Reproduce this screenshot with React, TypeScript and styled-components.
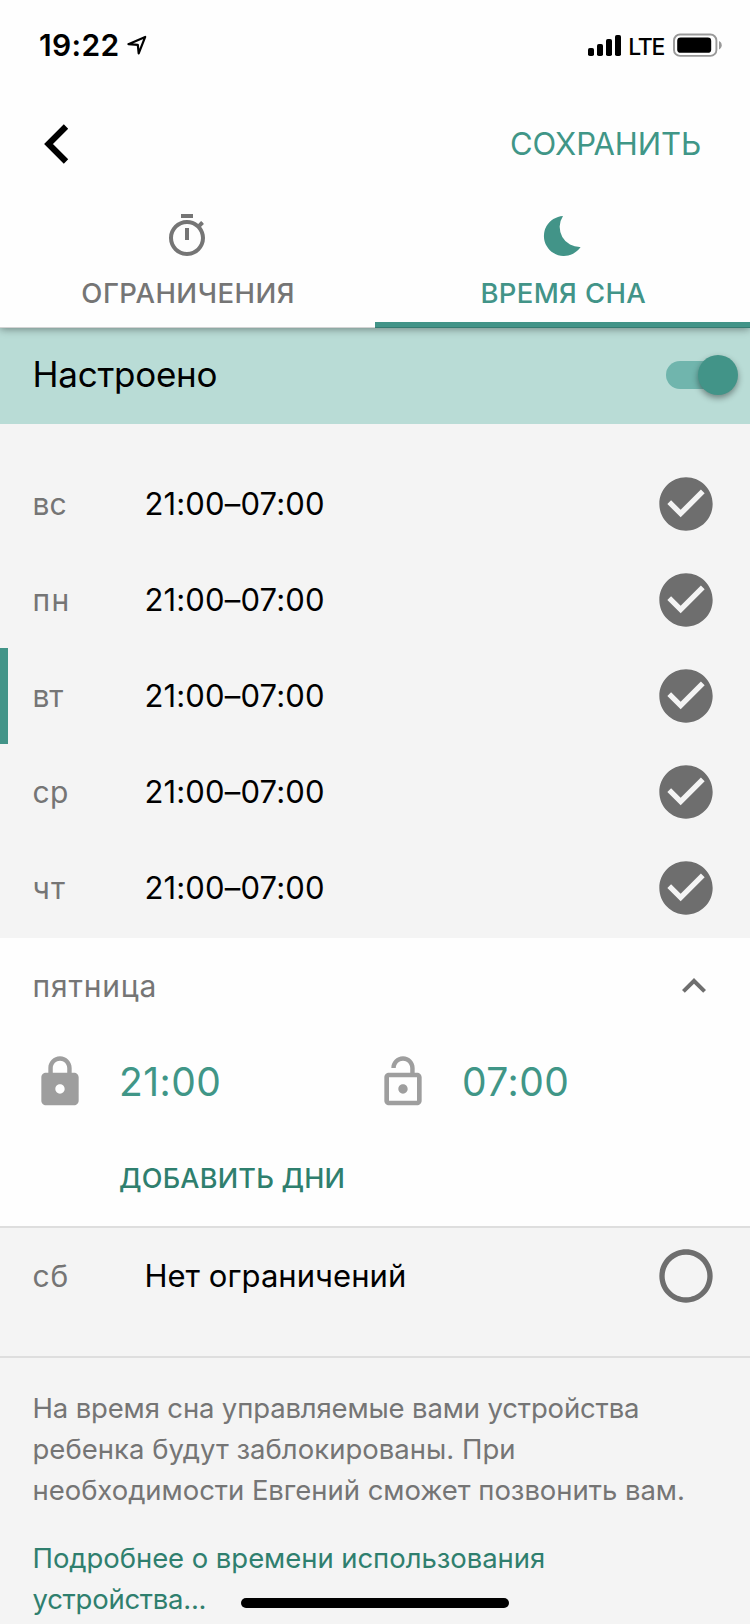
import React from "react";
import styled, { createGlobalStyle } from "styled-components";

const color = {
  accent: "#429488",
  accentText: "#409687",
  link: "#2f7f6e",
  grey: "#757575",
  icon: "#6e6e6e",
  lock: "#9e9e9e",
  page: "#f4f4f4",
  line: "#dedede",
};

const GlobalStyle = createGlobalStyle`
  * { box-sizing: border-box; }
  body {
    margin: 0;
    background: ${color.page};
    font-family: Inter, "Liberation Sans", sans-serif;
    color: #000;
  }
  svg { display: block; flex: none; }
`;

const Screen = styled.div`
  position: relative;
  width: 750px;
  height: 1624px;
  overflow: hidden;
  background: ${color.page};
  white-space: nowrap;
`;

const Header = styled.header`
  position: relative;
  z-index: 1;
  height: 328px;
  background: #fefefe;
  box-shadow: 0 1px 8px rgba(0, 0, 0, 0.42);
  &::after {
    content: "";
    position: absolute;
    left: 0;
    right: 0;
    bottom: 0;
    height: 1px;
    background: rgba(0, 0, 0, 0.17);
  }
`;

const StatusBar = styled.div`
  display: flex;
  align-items: center;
  height: 90px;
  padding: 0 28px 0 39px;
`;

const Clock = styled.div`
  font-size: 30px;
  font-weight: 600;
  line-height: 36px;
  letter-spacing: 0.34px;
  margin-right: 6px;
`;

const StatusRight = styled.div`
  display: flex;
  align-items: center;
  margin-left: auto;
`;

const Network = styled.span`
  font-size: 23px;
  font-weight: 500;
  line-height: 28px;
  letter-spacing: -1.3px;
  margin: 3px 9px 0 7px;
`;

const NavBar = styled.nav`
  display: flex;
  align-items: center;
  justify-content: space-between;
  height: 108px;
  padding: 0 49px 0 32px;
`;

const PlainButton = styled.button`
  border: 0;
  padding: 0;
  background: none;
  font: inherit;
  color: inherit;
`;

const SaveButton = styled(PlainButton)`
  font-size: 31px;
  line-height: 40px;
  letter-spacing: -0.1px;
  color: ${color.accentText};
`;

const Tabs = styled.div`
  display: grid;
  grid-template-columns: 1fr 1fr;
  height: 130px;
`;

const Tab = styled(PlainButton)<{ $active?: boolean; $spacing: number }>`
  display: flex;
  flex-direction: column;
  align-items: center;
  padding-top: 14px;
  gap: 16px;
  border-bottom: 6px solid ${(p) => (p.$active ? color.accent : "transparent")};
  color: ${(p) => (p.$active ? color.accent : color.grey)};
  font-size: 27.5px;
  font-weight: 450;
  line-height: 34px;
  letter-spacing: ${(p) => p.$spacing}px;

  svg {
    margin-right: 1px;
  }
`;

const TabLabel = styled.span`
  padding-left: 1.5px;
`;

const ToggleRow = styled.div`
  display: flex;
  align-items: center;
  justify-content: space-between;
  height: 96px;
  padding: 0 12px 2px 32px;
  background: #b9dcd6;
`;

const ToggleLabel = styled.span`
  padding: 0 0 2px 0.5px;
  font-size: 35px;
  line-height: 44px;
  letter-spacing: -0.25px;
`;

const Switch = styled.div`
  display: flex;
  align-items: center;
  justify-content: flex-end;
  width: 72px;
  height: 28px;
  border-radius: 14px;
  background: linear-gradient(to right, #70b5ad 54px, transparent 54px);
`;

const Knob = styled.span`
  width: 40px;
  height: 40px;
  border-radius: 50%;
  background: ${color.accent};
  box-shadow: 0 3px 6px rgba(0, 0, 0, 0.4);
`;

const DayList = styled.div`
  padding: 32px 0 2px;
`;

const DayRow = styled.div<{ $today?: boolean }>`
  display: flex;
  align-items: center;
  height: 96px;
  padding: 0 32px 0 24px;
  border-left: 8px solid ${(p) => (p.$today ? color.accent : "transparent")};
`;

const DayName = styled.span<{ $spacing?: number }>`
  width: 112px;
  padding-left: 0.6px;
  font-size: 30px;
  line-height: 40px;
  letter-spacing: ${(p) => p.$spacing ?? 0}px;
  color: ${color.grey};
`;

const DayValue = styled.span<{ $spacing?: number }>`
  flex: 1;
  padding-left: 0.4px;
  font-size: 31px;
  line-height: 40px;
  letter-spacing: ${(p) => p.$spacing ?? 0.17}px;
`;

const Card = styled.section`
  height: 290px;
  background: #fefefe;
  border-bottom: 2px solid ${color.line};
`;

const CardRow = styled.div`
  display: flex;
  align-items: center;
  height: 96px;
  padding: 0 32px;
`;

const CardHeader = styled(CardRow)`
  justify-content: space-between;
`;

const TimeSlot = styled.div`
  display: flex;
  align-items: center;
  gap: 31px;
  width: 343px;
  font-size: 39px;
  line-height: 48px;
  letter-spacing: 0.45px;
  color: ${color.accentText};
`;

const AddDays = styled(PlainButton)`
  margin-left: 87px;
  padding-top: 2px;
  font-size: 27px;
  font-weight: 550;
  line-height: 34px;
  letter-spacing: 0.22px;
  color: ${color.link};
`;

const LastDay = styled.div`
  height: 130px;
  border-bottom: 2px solid ${color.line};
`;

const Notes = styled.div`
  display: flex;
  flex-direction: column;
  gap: 27px;
  padding: 30px 32px 0 32.5px;
  font-size: 27.5px;
  line-height: 41px;
`;

const Note = styled.div`
  color: ${color.grey};
`;

const NoteLink = styled(Note)`
  color: ${color.link};
`;

const TextLine = styled.div<{ $spacing: number }>`
  letter-spacing: ${(p) => p.$spacing}px;
`;

const HomeIndicator = styled.div`
  position: absolute;
  left: 241px;
  bottom: 16px;
  width: 268px;
  height: 10px;
  border-radius: 5px;
  background: #000;
`;

const MaterialIcon = ({ size, fill = "currentColor", d }: { size: number; fill?: string; d: string }) => (
  <svg width={size} height={size} viewBox="0 0 24 24" fill={fill}>
    <path d={d} />
  </svg>
);

const icons = {
  timer:
    "M15 1H9v2h6V1zm-4 13h2V8h-2v6zm8.03-6.61l1.42-1.42c-.43-.51-.9-.99-1.41-1.41l-1.42 1.42C16.07 4.74 14.12 4 12 4c-4.97 0-9 4.03-9 9s4.02 9 9 9 9-4.03 9-9c0-2.12-.74-4.07-1.97-5.61zM12 20c-3.87 0-7-3.13-7-7s3.13-7 7-7 7 3.13 7 7-3.13 7-7 7z",
  moon: "M12.5 2A10 10 0 1 0 21.3 17.5A10 10 0 0 1 12.5 2z",
  checked:
    "M12 2C6.48 2 2 6.48 2 12s4.48 10 10 10 10-4.48 10-10S17.52 2 12 2zm-2 15l-5-5 1.41-1.41L10 14.17l7.59-7.59L19 8l-9 9z",
  unchecked:
    "M12 2C6.48 2 2 6.48 2 12s4.48 10 10 10 10-4.48 10-10S17.52 2 12 2zm0 18c-4.42 0-8-3.58-8-8s3.58-8 8-8 8 3.58 8 8-3.58 8-8 8z",
  collapse: "M12 8l-6 6 1.41 1.41L12 10.83l4.59 4.58L18 14z",
  lock: "M18 8h-1V6c0-2.76-2.24-5-5-5S7 3.24 7 6v2H6c-1.1 0-2 .9-2 2v10c0 1.1.9 2 2 2h12c1.1 0 2-.9 2-2V10c0-1.1-.9-2-2-2zm-6 9c-1.1 0-2-.9-2-2s.9-2 2-2 2 .9 2 2-.9 2-2 2zm3.1-9H8.9V6c0-1.71 1.39-3.1 3.1-3.1 1.71 0 3.1 1.39 3.1 3.1v2z",
  lockOpen:
    "M12 17c1.1 0 2-.9 2-2s-.9-2-2-2-2 .9-2 2 .9 2 2 2zm6-9h-1V6c0-2.76-2.24-5-5-5S7 3.24 7 6h1.9c0-1.71 1.39-3.1 3.1-3.1 1.71 0 3.1 1.39 3.1 3.1v2H6c-1.1 0-2 .9-2 2v10c0 1.1.9 2 2 2h12c1.1 0 2-.9 2-2V10c0-1.1-.9-2-2-2zm0 12H6V10h12v10z",
};

const LocationIcon = () => (
  <svg width="22" height="22" viewBox="0 0 22 22" fill="none" stroke="#000" strokeWidth="2.2" strokeLinejoin="round">
    <path d="M2.4 10.2L19.2 2.9L12.7 19.4L11.8 10.9z" />
  </svg>
);

const SignalIcon = () => (
  <svg width="33" height="22" viewBox="0 0 33 22">
    <rect x="0" y="14" width="6" height="8" rx="1.8" />
    <rect x="9" y="10" width="6" height="12" rx="1.8" />
    <rect x="18" y="5" width="6" height="17" rx="1.8" />
    <rect x="27" y="1" width="6" height="21" rx="1.8" />
  </svg>
);

const BatteryIcon = () => (
  <svg width="49" height="24" viewBox="0 0 49 24">
    <rect x="1" y="1.500" width="42.400" height="21.4" rx="6" fill="none" stroke="#999" strokeWidth="1.9" />
    <rect x="4.200" y="4.600" width="34" height="15.2" rx="3.4" />
    <path d="M46 8c1.6.6 2.7 2.2 2.7 4.2s-1.1 3.6-2.7 4.2z" fill="#999" />
  </svg>
);

const BackIcon = () => (
  <svg width="48" height="48" viewBox="0 0 48 48" fill="none" stroke="#000" strokeWidth="6.2">
    <path d="M34 6.500L16.500 24L34 41.500" />
  </svg>
);

const days = [
  { name: "вс", spacing: 0 },
  { name: "пн", spacing: 1.2 },
  { name: "вт", spacing: -0.3, today: true },
  { name: "ср", spacing: 0.3 },
  { name: "чт", spacing: 1 },
];

export default function App() {
  return (
    <>
      <GlobalStyle />
      <Screen>
        <Header>
          <StatusBar>
            <Clock>19:22</Clock>
            <LocationIcon />
            <StatusRight>
              <SignalIcon />
              <Network>LTE</Network>
              <BatteryIcon />
            </StatusRight>
          </StatusBar>
          <NavBar>
            <PlainButton>
              <BackIcon />
            </PlainButton>
            <SaveButton>СОХРАНИТЬ</SaveButton>
          </NavBar>
          <Tabs>
            <Tab $spacing={0.5}>
              <MaterialIcon size={48} d={icons.timer} />
              <TabLabel>ОГРАНИЧЕНИЯ</TabLabel>
            </Tab>
            <Tab $active $spacing={0.34}>
              <MaterialIcon size={48} d={icons.moon} />
              <TabLabel>ВРЕМЯ СНА</TabLabel>
            </Tab>
          </Tabs>
        </Header>

        <ToggleRow>
          <ToggleLabel>Настроено</ToggleLabel>
          <Switch>
            <Knob />
          </Switch>
        </ToggleRow>

        <DayList>
          {days.map((day) => (
            <DayRow key={day.name} $today={day.today}>
              <DayName $spacing={day.spacing}>{day.name}</DayName>
              <DayValue>21:00–07:00</DayValue>
              <MaterialIcon size={64} fill={color.icon} d={icons.checked} />
            </DayRow>
          ))}
        </DayList>

        <Card>
          <CardHeader>
            <DayName $spacing={0.8}>пятница</DayName>
            <MaterialIcon size={48} fill={color.icon} d={icons.collapse} />
          </CardHeader>
          <CardRow>
            <TimeSlot>
              <MaterialIcon size={56} fill={color.lock} d={icons.lock} />
              21:00
            </TimeSlot>
            <TimeSlot>
              <MaterialIcon size={56} fill={color.lock} d={icons.lockOpen} />
              07:00
            </TimeSlot>
          </CardRow>
          <CardRow>
            <AddDays>ДОБАВИТЬ ДНИ</AddDays>
          </CardRow>
        </Card>

        <LastDay>
          <DayRow>
            <DayName $spacing={0.8}>сб</DayName>
            <DayValue $spacing={0.05}>Нет ограничений</DayValue>
            <MaterialIcon size={64} fill={color.icon} d={icons.unchecked} />
          </DayRow>
        </LastDay>

        <Notes>
          <Note>
            <TextLine $spacing={-0.15}>На время сна управляемые вами устройства</TextLine>
            <TextLine $spacing={0.02}>ребенка будут заблокированы. При</TextLine>
            <TextLine $spacing={-0.05}>необходимости Евгений сможет позвонить вам.</TextLine>
          </Note>
          <NoteLink>
            <TextLine $spacing={-0.06}>Подробнее о времени использования</TextLine>
            <TextLine $spacing={-0.26}>устройства...</TextLine>
          </NoteLink>
        </Notes>
        <HomeIndicator />
      </Screen>
    </>
  );
}
